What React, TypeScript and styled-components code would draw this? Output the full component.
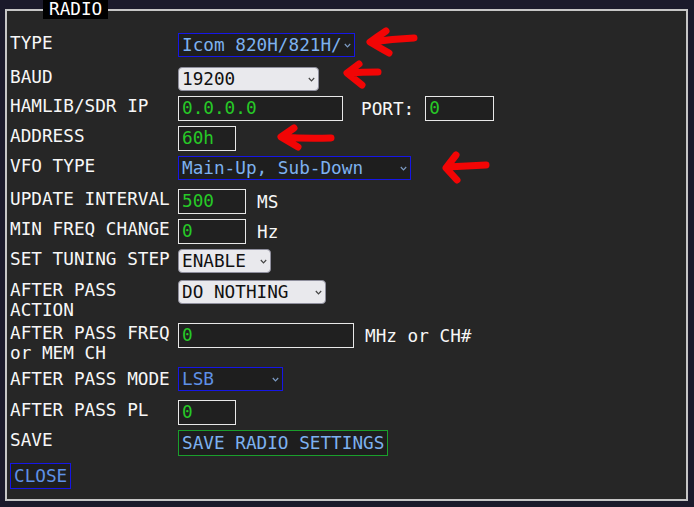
import React from "react";
import styled, { createGlobalStyle } from "styled-components";

const mono = `"DejaVu Sans Mono", "Liberation Mono", monospace`;

const GlobalStyle = createGlobalStyle`
  html, body {
    margin: 0;
    padding: 0;
    background: #1b1a2b;
  }
  * {
    box-sizing: border-box;
  }
`;

const Page = styled.div`
  position: relative;
  height: 507px;
  padding: 0 6px 6px 5px;
  display: flex;
  flex-direction: column;
  font-family: ${mono};
  font-size: 17.7px;
`;

const Panel = styled.fieldset`
  flex: 1;
  margin: 0;
  min-width: 0;
  border: 2px solid #c6c6c6;
  background: #262626;
  padding: 14px 3px 8px 3px;
`;

const Legend = styled.legend`
  margin-left: 33px;
  padding: 0 6px;
  background: #000;
  color: #fff;
  line-height: 19px;
`;

const Row = styled.div<{ $pitch: number }>`
  display: grid;
  grid-template-columns: 168px 1fr;
  align-items: start;
  height: ${(p) => p.$pitch}px;
`;

const Label = styled.div<{ $drop?: number }>`
  color: #f7f7f7;
  line-height: 20px;
  margin-top: ${(p) => p.$drop ?? 0}px;
`;

const Controls = styled.div`
  display: flex;
  align-items: center;
  gap: 11px;
`;

const Unit = styled.span<{ $extra?: number }>`
  color: #f7f7f7;
  margin-left: ${(p) => p.$extra ?? 0}px;
`;

const TextBox = styled.div<{ $w: number }>`
  width: ${(p) => p.$w}px;
  height: 25px;
  border: 1px solid #e8e8e8;
  background: #202020;
  color: #27c927;
  padding: 0 3px;
  line-height: 23px;
  overflow: hidden;
  white-space: nowrap;
`;

const SelectBox = styled.div<{ $w: number; $light?: boolean; $tone?: string }>`
  width: ${(p) => p.$w}px;
  height: 24px;
  display: flex;
  align-items: center;
  padding: 0 3px 0 3px;
  border: 1px solid ${(p) => (p.$light ? "#8f8f9d" : "#1616e6")};
  border-radius: ${(p) => (p.$light ? "4px" : "0")};
  background: ${(p) => (p.$light ? "#e9e9ed" : "#1e1e1e")};
  color: ${(p) => (p.$light ? "#111" : p.$tone ?? "#7db1ef")};
  line-height: 22px;
`;

const SelectText = styled.span`
  flex: 1;
  overflow: hidden;
  white-space: nowrap;
`;

const Chevron = styled.svg<{ $light?: boolean }>`
  flex: none;
  width: 7px;
  height: 5px;
  margin-left: 1px;
  stroke: ${(p) => (p.$light ? "#444" : "#7d9bc4")};
`;

const ActionButton = styled.button<{ $edge: string; $tone: string }>`
  font: inherit;
  height: 26px;
  padding: 0 3px;
  border: 1px solid ${(p) => p.$edge};
  background: #1e1e1e;
  color: ${(p) => p.$tone};
  line-height: 24px;
  cursor: pointer;
`;

// hand-drawn red markers laid over the form
const Marks = styled.svg`
  position: absolute;
  inset: 0;
  width: 100%;
  height: 100%;
  pointer-events: none;
  fill: none;
  stroke: #f20505;
  stroke-width: 7;
  stroke-linecap: round;
  stroke-linejoin: round;
`;

const arrows = [
  "M386 31 Q377 37 370 42 Q380 48 389 53 M371 42 Q392 39 414 38",
  "M359 64 L347 73 L362 85 M348 73 Q362 72 378 72",
  "M294 128 L281 137 L298 147 M282 137 Q305 139 331 138",
  "M456 155 L446 168 L457 180 M447 167 Q466 166 486 165",
];

const Select: React.FC<{ w: number; light?: boolean; tone?: string; value: string }> = ({
  w,
  light,
  tone,
  value,
}) => (
  <SelectBox $w={w} $light={light} $tone={tone}>
    <SelectText>{value}</SelectText>
    <Chevron $light={light} viewBox="0 0 7 5" fill="none" strokeWidth="1.2">
      <polyline points="0.8,1 3.5,3.8 6.2,1" />
    </Chevron>
  </SelectBox>
);

export default function App() {
  return (
    <Page>
      <GlobalStyle />
      <Panel>
        <Legend>RADIO</Legend>
        <Row $pitch={34}>
          <Label>TYPE</Label>
          <Controls>
            <Select w={177} value="Icom 820H/821H/" />
          </Controls>
        </Row>
        <Row $pitch={29}>
          <Label>BAUD</Label>
          <Controls>
            <Select w={141} light value="19200" />
          </Controls>
        </Row>
        <Row $pitch={30}>
          <Label>HAMLIB/SDR IP</Label>
          <Controls>
            <TextBox $w={165}>0.0.0.0</TextBox>
            <Unit $extra={7}>PORT:</Unit>
            <TextBox $w={69}>0</TextBox>
          </Controls>
        </Row>
        <Row $pitch={30}>
          <Label>ADDRESS</Label>
          <Controls>
            <TextBox $w={58}>60h</TextBox>
          </Controls>
        </Row>
        <Row $pitch={33}>
          <Label>VFO TYPE</Label>
          <Controls>
            <Select w={233} value="Main-Up, Sub-Down" />
          </Controls>
        </Row>
        <Row $pitch={30}>
          <Label>UPDATE INTERVAL</Label>
          <Controls>
            <TextBox $w={68}>500</TextBox>
            <Unit>MS</Unit>
          </Controls>
        </Row>
        <Row $pitch={30}>
          <Label>MIN FREQ CHANGE</Label>
          <Controls>
            <TextBox $w={68}>0</TextBox>
            <Unit>Hz</Unit>
          </Controls>
        </Row>
        <Row $pitch={31}>
          <Label>SET TUNING STEP</Label>
          <Controls>
            <Select w={93} light value="ENABLE" />
          </Controls>
        </Row>
        <Row $pitch={43}>
          <Label>AFTER PASS ACTION</Label>
          <Controls>
            <Select w={148} light value="DO NOTHING" />
          </Controls>
        </Row>
        <Row $pitch={44}>
          <Label>AFTER PASS FREQ or MEM CH</Label>
          <Controls>
            <TextBox $w={176}>0</TextBox>
            <Unit>MHz or CH#</Unit>
          </Controls>
        </Row>
        <Row $pitch={33}>
          <Label $drop={2}>AFTER PASS MODE</Label>
          <Controls>
            <Select w={105} tone="#5e90e6" value="LSB" />
          </Controls>
        </Row>
        <Row $pitch={30}>
          <Label>AFTER PASS PL</Label>
          <Controls>
            <TextBox $w={58}>0</TextBox>
          </Controls>
        </Row>
        <Row $pitch={33}>
          <Label>SAVE</Label>
          <Controls>
            <ActionButton $edge="#1a9f2c" $tone="#7db1ef">
              SAVE RADIO SETTINGS
            </ActionButton>
          </Controls>
        </Row>
        <ActionButton $edge="#1616e6" $tone="#5e90e6">
          CLOSE
        </ActionButton>
      </Panel>
      <Marks viewBox="0 0 694 507">
        {arrows.map((d, i) => (
          <path key={i} d={d} />
        ))}
      </Marks>
    </Page>
  );
}
